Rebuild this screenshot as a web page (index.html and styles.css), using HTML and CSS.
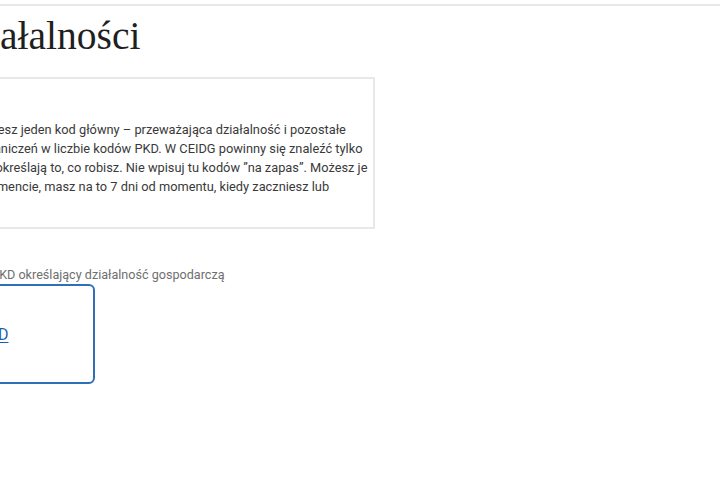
FILE: index.html
```html
<!DOCTYPE html>
<html lang="pl">
<head>
<meta charset="utf-8">
<title>Rodzaj działalności</title>
<link rel="stylesheet" href="styles.css">
</head>
<body>
<header class="topbar"></header>
<main class="page">
  <h1 class="title">Rodzaj działalności</h1>
  <section class="info">
    <h2 class="info-title">Ważne</h2>
    <p class="info-text">Z listy kodów PKD wskażesz jeden kod główny – przeważająca działalność i pozostałe<br>dodatkowe – nie ma ograniczeń w liczbie kodów PKD. W CEIDG powinny się znaleźć tylko<br>te kody, które faktycznie określają to, co robisz. Nie wpisuj tu kodów ”na zapas”. Możesz je<br>zmienić w dowolnym momencie, masz na to 7 dni od momentu, kiedy zaczniesz lub<br>zmienisz.</p>
  </section>
  <div class="field">
    <p class="field-label">Wybierz minimum jeden kod PKD określający działalność gospodarczą</p>
    <button class="add-button" type="button"><span class="add-link">Dodaj kod PKD</span></button>
  </div>
</main>
</body>
</html>
```
FILE: styles.css
```css
html, body {
  margin: 0;
  padding: 0;
  background: #ffffff;
  overflow: hidden;
}

body {
  font-family: Roboto, "Liberation Sans", sans-serif;
  width: 720px;
  height: 500px;
}

.topbar {
  height: 4px;
  border-bottom: 2px solid #e8e8e8;
}

.page {
  margin-left: -170px;
  width: 545px;
}

.title {
  font-family: "Liberation Serif", serif;
  font-weight: normal;
  font-size: 39.5px;
  line-height: 48px;
  color: #1f1f1f;
  margin: 6px 0 17px;
  white-space: nowrap;
}

.info {
  border: 2px solid #e8e8e8;
  padding: 22px 12px 12px 24px;
}

.info-title {
  margin: 0;
  font-size: 12.8px;
  line-height: 19px;
  font-weight: bold;
  color: #333;
}

.info-text {
  margin: 0;
  font-size: 12.8px;
  line-height: 19px;
  color: #3a3a3a;
  white-space: nowrap;
}

.field {
  margin-top: 36px;
}

.field-label {
  margin: 0;
  font-size: 12.6px;
  line-height: 19px;
  color: #6f6f6f;
  white-space: nowrap;
}

.add-button {
  display: flex;
  align-items: center;
  justify-content: center;
  box-sizing: border-box;
  width: 265px;
  height: 100px;
  padding: 0 14px 0 0;
  background: #fff;
  border: 2px solid #2f6fb8;
  border-radius: 6px;
  font-family: Roboto, "Liberation Sans", sans-serif;
  cursor: pointer;
}

.add-link {
  font-size: 16px;
  color: #1f5fae;
  text-decoration: underline;
  text-underline-offset: 2px;
}
```
